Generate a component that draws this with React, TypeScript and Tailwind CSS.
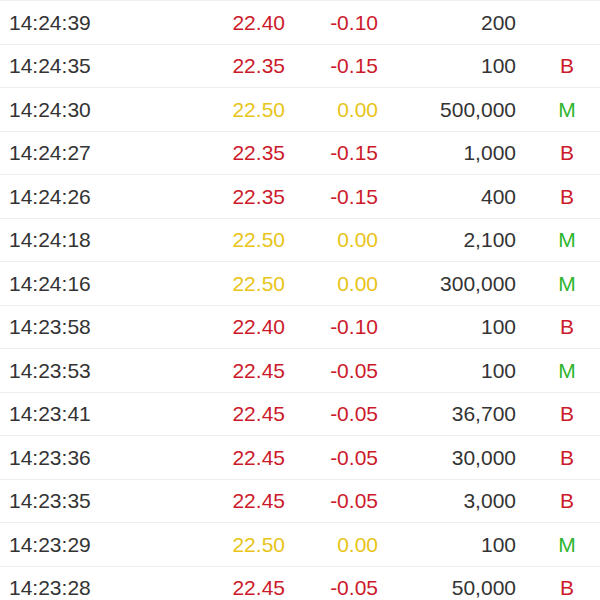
import React from "react";

type Row = { t: string; p: string; c: string; v: string; f: string; k: "r" | "y" };

const rows: Row[] = [
  { t: "14:24:39", p: "22.40", c: "-0.10", v: "200", f: "", k: "r" },
  { t: "14:24:35", p: "22.35", c: "-0.15", v: "100", f: "B", k: "r" },
  { t: "14:24:30", p: "22.50", c: "0.00", v: "500,000", f: "M", k: "y" },
  { t: "14:24:27", p: "22.35", c: "-0.15", v: "1,000", f: "B", k: "r" },
  { t: "14:24:26", p: "22.35", c: "-0.15", v: "400", f: "B", k: "r" },
  { t: "14:24:18", p: "22.50", c: "0.00", v: "2,100", f: "M", k: "y" },
  { t: "14:24:16", p: "22.50", c: "0.00", v: "300,000", f: "M", k: "y" },
  { t: "14:23:58", p: "22.40", c: "-0.10", v: "100", f: "B", k: "r" },
  { t: "14:23:53", p: "22.45", c: "-0.05", v: "100", f: "M", k: "r" },
  { t: "14:23:41", p: "22.45", c: "-0.05", v: "36,700", f: "B", k: "r" },
  { t: "14:23:36", p: "22.45", c: "-0.05", v: "30,000", f: "B", k: "r" },
  { t: "14:23:35", p: "22.45", c: "-0.05", v: "3,000", f: "B", k: "r" },
  { t: "14:23:29", p: "22.50", c: "0.00", v: "100", f: "M", k: "y" },
  { t: "14:23:28", p: "22.45", c: "-0.05", v: "50,000", f: "B", k: "r" },
];

export default function App() {
  return (
    <div
      className="w-[600px] h-[600px] overflow-hidden bg-white border-t border-[#f0f0f0] text-[21px] text-[#333333]"
      style={{ fontFamily: '"Liberation Sans", Arial, sans-serif' }}
    >
      {rows.map((r, i) => {
        const col = r.k === "r" ? "text-[#cc1a2b]" : "text-[#e8c419]";
        return (
          <div
            key={i}
            className="grid grid-cols-[150px_135px_93px_138px_84px] items-center h-[43.5px] border-b border-[#efefef]"
          >
            <div className="pl-[9px]">{r.t}</div>
            <div className={`text-right ${col}`}>{r.p}</div>
            <div className={`text-right ${col}`}>{r.c}</div>
            <div className="text-right">{r.v}</div>
            <div
              className={`pl-[18px] text-center ${r.f === "M" ? "text-[#2db52d]" : "text-[#cc1a2b]"}`}
            >
              {r.f}
            </div>
          </div>
        );
      })}
    </div>
  );
}
